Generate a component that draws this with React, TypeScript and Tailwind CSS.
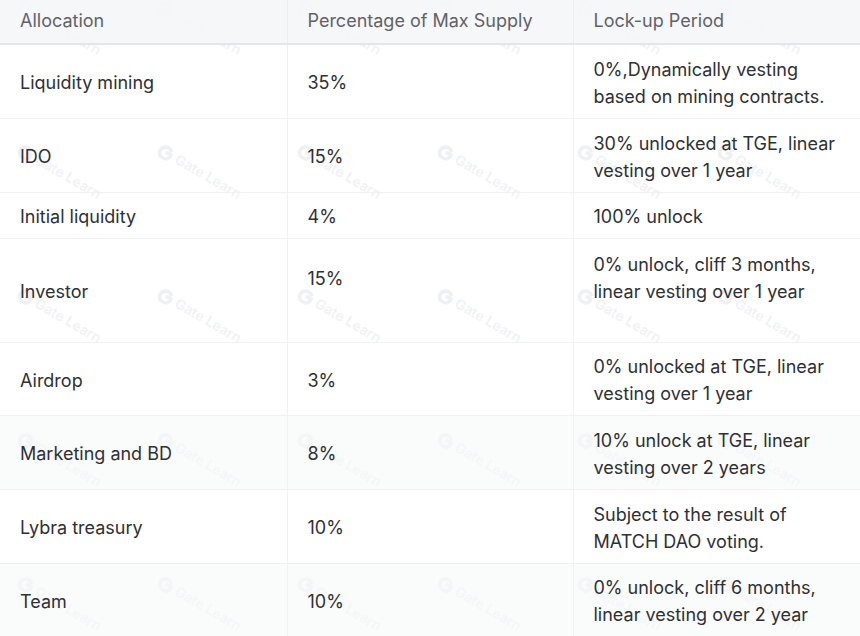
import React from "react";

type Row = {
  allocation: string;
  share: string;
  lockup: string[];
  height: string;
  striped?: boolean;
  shareTop?: boolean;
};

const rows: Row[] = [
  {
    allocation: "Liquidity mining",
    share: "35%",
    lockup: ["0%,Dynamically vesting", "based on mining contracts."],
    height: "h-[74px]",
  },
  {
    allocation: "IDO",
    share: "15%",
    lockup: ["30% unlocked at TGE, linear", "vesting over 1 year"],
    height: "h-[74px]",
  },
  {
    allocation: "Initial liquidity",
    share: "4%",
    lockup: ["100% unlock"],
    height: "h-[46px]",
  },
  {
    allocation: "Investor",
    share: "15%",
    lockup: ["0% unlock, cliff 3 months,", "linear vesting over 1 year", ""],
    height: "h-[104px]",
    shareTop: true,
  },
  {
    allocation: "Airdrop",
    share: "3%",
    lockup: ["0% unlocked at TGE, linear", "vesting over 1 year"],
    height: "h-[73px]",
  },
  {
    allocation: "Marketing and BD",
    share: "8%",
    lockup: ["10% unlock at TGE, linear", "vesting over 2 years"],
    height: "h-[74px]",
    striped: true,
  },
  {
    allocation: "Lybra treasury",
    share: "10%",
    lockup: ["Subject to the result of", "MATCH DAO voting."],
    height: "h-[74px]",
  },
  {
    allocation: "Team",
    share: "10%",
    lockup: ["0% unlock, cliff 6 months,", "linear vesting over 2 year"],
    height: "h-[73px]",
    striped: true,
  },
];

function Watermark({ x, y }: { x: number; y: number }) {
  return (
    <div
      className="absolute flex items-center gap-1 text-[14px] font-semibold text-[#f1f2f4] rotate-[30deg] origin-top-left"
      style={{ left: x, top: y }}
    >
      <svg width="16" height="16" viewBox="0 0 16 16">
        <path d="M13 5.5A6 6 0 1 0 14 8H8" fill="none" stroke="#eef0f2" strokeWidth="3.5" />
      </svg>
      <span>Gate Learn</span>
    </div>
  );
}

export default function App() {
  const marks: { x: number; y: number }[] = [];
  for (let r = 0; r < 5; r++) {
    for (let c = 0; c < 6; c++) {
      marks.push({ x: 26 + c * 140, y: -8 + r * 144 });
    }
  }

  return (
    <div className="relative w-[860px] h-[636px] overflow-hidden bg-white font-['Inter','Liberation_Sans',sans-serif] text-[18px] leading-[27px] text-[#2e3034]">
      {/* faint watermark behind the table */}
      <div className="pointer-events-none absolute inset-0">
        {marks.map((m, i) => (
          <Watermark key={i} x={m.x} y={m.y} />
        ))}
      </div>
      <table className="relative w-full border-collapse table-fixed">
        <colgroup>
          <col className="w-[287px]" />
          <col className="w-[286px]" />
          <col className="w-[287px]" />
        </colgroup>
        <thead>
          <tr className="h-[44px] bg-[#f5f6f8]/90 border-b-2 border-[#e3e6eb] text-[#5f6368]">
            <th className="px-5 pb-[2px] text-left font-normal align-middle">Allocation</th>
            <th className="px-5 pb-[2px] text-left font-normal align-middle border-l border-[#ebedf0]">
              Percentage of Max Supply
            </th>
            <th className="px-5 pb-[2px] text-left font-normal align-middle border-l border-[#ebedf0]">
              Lock-up Period
            </th>
          </tr>
        </thead>
        <tbody>
          {rows.map((row) => (
            <tr
              key={row.allocation}
              className={`${row.height} border-b border-[#f0f1f3] ${row.striped ? "bg-[#f7f8f9]/60" : ""}`}
            >
              <td className="px-5 pt-[3px] align-middle">{row.allocation}</td>
              <td className="px-5 pt-[3px] align-middle border-l border-[#f0f1f3]">
                <div>{row.share}</div>
                {row.shareTop && <div className="h-[27px]" />}
              </td>
              <td className="px-5 pt-[3px] align-middle border-l border-[#f0f1f3]">
                {row.lockup.map((line, i) => (
                  <div key={i} className="h-[27px] whitespace-nowrap">
                    {line}
                  </div>
                ))}
              </td>
            </tr>
          ))}
        </tbody>
      </table>
    </div>
  );
}
